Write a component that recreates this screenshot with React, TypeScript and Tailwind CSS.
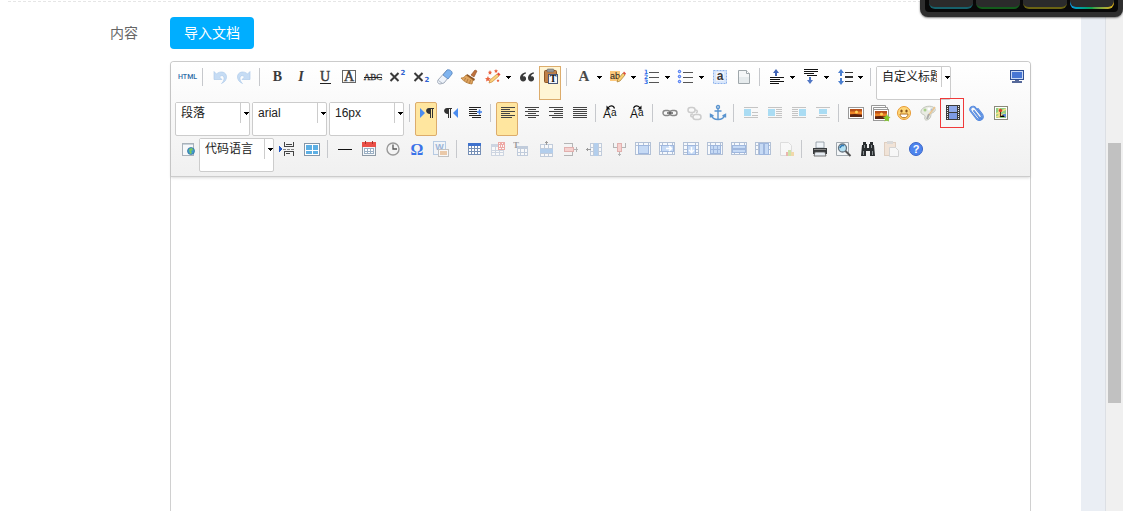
import React from "react";

type Tool = {
  name: string;
  icon?: React.ReactNode;
  arrow?: boolean;
  active?: "soft" | "strong";
  framed?: boolean;
  select?: boolean;
  disabled?: boolean;
};

const SERIF = "Liberation Serif, serif";
const SANS = "Liberation Sans, sans-serif";
const WIDE = "DejaVu Sans, sans-serif";

const sep: Tool = { name: "|" };

/* horizontal text lines, each one is [x1, x2, y] */
const lines = (rows: number[][], color = "#222") => (
  <g shapeRendering="crispEdges" fill={color}>
    {rows.map(([a, b, y]) => (
      <rect key={`${a}-${b}-${y}`} x={a} y={y} width={b - a} height="1" />
    ))}
  </g>
);

/* faded table with the affected cells [x, y, w, h] filled in */
const cells = (cols: number[], rows: number[], fills: number[][]) => (
  <g shapeRendering="crispEdges">
    <rect x="1" y="1" width="16" height="13" fill="#b3c1d6" />
    <rect x="2" y="2" width="14" height="11" fill="#f6f9fd" />
    {cols.map((x) => (
      <rect key={`c${x}`} x={x} y="1" width="1" height="13" fill="#b3c1d6" />
    ))}
    {rows.map((y) => (
      <rect key={`r${y}`} x="1" y={y} width="16" height="1" fill="#b3c1d6" />
    ))}
    {fills.map(([x, y, w, h]) => (
      <g key={`${x}-${y}`}>
        <rect x={x} y={y} width={w} height={h} fill="#9fb7de" />
        <rect x={x + 1} y={y + 1} width={w - 2} height={h - 2} fill="#c6daf5" />
      </g>
    ))}
  </g>
);

const floatLines = [
  [1, 15, 3],
  [1, 15, 13],
];

const textIcon = (
  t: string,
  size = 14,
  props: React.SVGProps<SVGTextElement> = {},
) => (
  <text
    x="8.5"
    y="12"
    textAnchor="middle"
    fontFamily={SERIF}
    fontSize={size}
    fontWeight="bold"
    fill="#3a3a3a"
    {...props}
  >
    {t}
  </text>
);

const curlUndo = (
  <path
    d="M2 2.500v8h8L7.500 8C9 6 12 6 12 9.500c0 2-1 3.500-2.500 5 3.500-1.500 5-4 5-6.500C14.500 2.500 8 1.500 4.500 5z"
    fill="#c6dcf4"
    stroke="#a9c8ea"
    strokeWidth=".6"
  />
);

const pilcrow = (x: number) => (
  <g transform={`translate(${x} 0)`} fill="#333">
    <path d="M4 3h5v1H8v9H7V4H6v9H5V9C0 9 0 3 4 3z" />
  </g>
);

const film = (
  <g shapeRendering="crispEdges">
    <rect x="2" y="0" width="14" height="15" fill="#3c3c3c" />
    <rect x="5" y="1" width="8" height="6" fill="#8fa9ea" />
    <rect x="5" y="8" width="8" height="6" fill="#7d9ae4" />
    {[1, 3, 5, 7, 9, 11, 13].map((y) => (
      <g key={y} fill="#eee">
        <rect x="3" y={y} width="1" height="1" />
        <rect x="14" y={y} width="1" height="1" />
      </g>
    ))}
  </g>
);

const sunset = (
  <g>
    <rect x="0.5" y="2.5" width="15" height="11" fill="#fff" stroke="#999" />
    <rect x="2" y="4" width="12" height="8" fill="#b8501a" />
    <path d="M2 6.500h12v2.500H2z" fill="#ee8426" />
    <circle cx="8.500" cy="7" r="1.500" fill="#ffd35a" />
    <path d="M2 9.500l5-.5 7 1v2H2z" fill="#5a2410" />
  </g>
);

const cased = (flip: boolean) => (
  <g>
    <text x="1" y="13" fontFamily={SANS} fontSize="12" fill="#111">
      A
    </text>
    <text x="9" y="11" fontFamily={SANS} fontSize="10" fill="#111">
      a
    </text>
    <g transform={flip ? "translate(17 0) scale(-1 1)" : ""}>
      <path d="M6 3C7.500 0 11.500 0 12.500 3.500" stroke="#111" strokeWidth="1.200" fill="none" />
      <path d="M4.500 0.500v4h4z" fill="#111" />
    </g>
  </g>
);

const rowOne: Tool[] = [
  {
    name: "源代码",
    icon: (
      <text x="-1" y="10" fontFamily="Roboto, sans-serif" fontSize="7" fontWeight="500" fill="#2f6ca8">
        HTML
      </text>
    ),
  },
  sep,
  { name: "撤销", icon: curlUndo, disabled: true },
  {
    name: "重做",
    icon: <g transform="translate(16 0) scale(-1 1)">{curlUndo}</g>,
    disabled: true,
  },
  sep,
  { name: "加粗", icon: textIcon("B", 14) },
  { name: "斜体", icon: textIcon("I", 14, { x: 8, fontStyle: "italic" }) },
  {
    name: "下划线",
    icon: (
      <>
        {textIcon("U", 14, { x: 8, y: 12, fontWeight: "normal", stroke: "#3a3a3a", strokeWidth: 0.4 })}
        {lines([[3, 14, 14]])}
      </>
    ),
  },
  {
    name: "字符边框",
    icon: (
      <>
        <rect x="1.5" y="1.5" width="13" height="12" fill="none" stroke="#666" />
        {textIcon("A", 14, { x: 8, fontWeight: "normal", stroke: "#3a3a3a", strokeWidth: 0.4 })}
      </>
    ),
  },
  {
    name: "删除线",
    icon: (
      <>
        {textIcon("ABC", 9, { x: 8, y: 11, fontWeight: "normal", stroke: "#3a3a3a", strokeWidth: 0.3 })}
        {lines([[-1, 17, 8]])}
      </>
    ),
  },
  {
    name: "上标",
    icon: (
      <>
        <path d="M1.500 4l8 8M9.500 4l-8 8" stroke="#3a3a3a" strokeWidth="2" />
        {textIcon("2", 7, { x: 14, y: 6, fontFamily: WIDE, fill: "#2f62d0" })}
      </>
    ),
  },
  {
    name: "下标",
    icon: (
      <>
        <path d="M1.500 4l8 8M9.500 4l-8 8" stroke="#3a3a3a" strokeWidth="2" />
        {textIcon("2", 7, { x: 14, y: 13, fontFamily: WIDE, fill: "#2f62d0" })}
      </>
    ),
  },
  {
    name: "清除格式",
    icon: (
      <g>
        <path d="M1 11L10 1l5 3-8 10-4 1c-2 0-3-2-2-4z" fill="#eef3fa" stroke="#8b97a8" strokeWidth=".8" />
        <path d="M6 6l4-5c2-1 6 1 5 4l-4 5z" fill="#7fb4ef" stroke="#5b85bd" strokeWidth=".8" />
        <path d="M1.500 11.500l4 3" stroke="#aab4c2" />
      </g>
    ),
  },
  {
    name: "格式刷",
    icon: (
      <g>
        <path d="M10 6l4-5 2 1-3 6z" fill="#c0723c" stroke="#8d4c20" strokeWidth=".6" />
        <path d="M6 5l8 5-1 2-8-5z" fill="#8a5426" />
        <path d="M5 6l7 5-1 4c-4-.5-8-2-11-6 2 0 4-1 5-3z" fill="#e0a560" stroke="#a96d25" strokeWidth=".7" />
        <path d="M4.500 9l-1 2.500M7 10l-1.500 3.500M9.500 11l-1 3.500" stroke="#a06c30" strokeWidth=".7" />
      </g>
    ),
  },
  {
    name: "自动排版",
    arrow: true,
    icon: (
      <g>
        <path d="M4 14l1-3L12 5l2 2-7 6z" fill="#fbd07c" stroke="#c98b3a" strokeWidth=".7" />
        <path d="M12 5l1.500-1.500 2 2L14 7z" fill="#e94c3c" />
        <path d="M3 7l.8 2 2 .2-1.500 1.300.5 2L3 11.500l-2 1 .5-2L0 9.200 2 9zM5 1l.6 1.500L7 3 6 4l.3 1.500L5 5l-1.500.5L4 4 3 3l1.400-.5zM11 0l.6 1.200 1.400.3-1 1 .2 1.300-1.200-.6-1.200.6.2-1.300-1-1 1.400-.3zM13 10l.5 1 1 .3-.7.8.2 1-1-.5-1 .5.2-1-.7-.8 1-.3z" fill="#ea6440" />
      </g>
    ),
  },
  {
    name: "引用",
    icon: (
      <path
        d="M7 3.500C3.500 3.500 1 6 1 9c0 5 7 4 6 0-.4-2-2-2-3-1.500C4 6 5 5 7 4.500zM15 3.500c-3.500 0-6 2.500-6 5.500 0 5 7 4 6 0-.4-2-2-2-3-1.500 0-1.500 1-2.500 3-3z"
        fill="#3a3a3a"
      />
    ),
  },
  {
    name: "纯文本粘贴模式",
    active: "soft",
    icon: (
      <g>
        <rect x="1.500" y="1.500" width="12" height="12" rx="1" fill="#c08048" stroke="#8e5826" />
        <rect x="4" y="0" width="7" height="3" rx="1" fill="#9a9a9a" stroke="#666" strokeWidth=".6" />
        <rect x="5.500" y="5.500" width="9" height="9" fill="#f4f7fc" stroke="#4b5878" />
        <text x="10" y="13" textAnchor="middle" fontFamily={SERIF} fontSize="10" fontWeight="bold" fill="#111">
          T
        </text>
      </g>
    ),
  },
  sep,
  { name: "字体颜色", arrow: true, icon: textIcon("A", 15, { x: 8, y: 12, fill: "#4a4a4a" }) },
  {
    name: "背景色",
    arrow: true,
    icon: (
      <g>
        <rect x="0" y="2" width="10" height="10" fill="#fcc87c" />
        <text x="0" y="10" fontFamily={SANS} fontSize="9" fill="#222">
          ab
        </text>
        <path d="M8 10l5-6 2 2-5 6-3 1z" fill="#f7cf72" stroke="#a57a34" strokeWidth=".7" />
        <path d="M13 4l1-1.500 2 2-1 1.500z" fill="#e04c3c" />
      </g>
    ),
  },
  {
    name: "有序列表",
    arrow: true,
    icon: (
      <g>
        {["1", "2", "3"].map((n, i) => (
          <text key={n} x="0" y={5 + i * 5} fontFamily={WIDE} fontSize="6" fontWeight="bold" fill="#2f6fe8">
            {n}
          </text>
        ))}
        {lines([[5, 15, 3], [5, 15, 8], [5, 15, 13]], "#555")}
      </g>
    ),
  },
  {
    name: "无序列表",
    arrow: true,
    icon: (
      <g>
        {[2, 7, 12].map((y) => (
          <circle key={y} cx="1.500" cy={y + 0.5} r="1.200" fill="#bcd0ff" stroke="#2f62f0" />
        ))}
        {lines([[5, 15, 3], [5, 15, 8], [5, 15, 13]], "#555")}
      </g>
    ),
  },
  {
    name: "全选",
    icon: (
      <g>
        <rect x="1.500" y="1.500" width="13" height="13" fill="#d9e7fb" stroke="#8db2ec" strokeDasharray="2 1" />
        <rect x="4" y="3" width="8" height="9" fill="#f0f4fc" />
        {textIcon("a", 12, { x: 8, y: 11, fontFamily: SANS })}
      </g>
    ),
  },
  {
    name: "清空文档",
    icon: (
      <g>
        <path d="M2.500 1.500h8l3 3v10h-11z" fill="#f5f7f8" stroke="#9fa7ab" />
        <path d="M3 8h10v6H3z" fill="#e6ebed" />
        <path d="M10.500 1.500v3h3" fill="#fff" stroke="#9fa7ab" />
      </g>
    ),
  },
  sep,
  {
    name: "段前距",
    arrow: true,
    icon: (
      <g>
        <path d="M7 0l3 4H8v3H6V4H4z" fill="#3f63b5" />
        {lines([[1, 15, 8], [1, 11, 10], [1, 15, 12], [1, 10, 14]], "#111")}
      </g>
    ),
  },
  {
    name: "段后距",
    arrow: true,
    icon: (
      <g>
        <path d="M7 15l3-4H8V8H6v3H4z" fill="#5076c4" />
        {lines([[1, 15, 0], [1, 15, 2], [1, 11, 4], [4, 14, 6]], "#111")}
      </g>
    ),
  },
  {
    name: "行间距",
    arrow: true,
    icon: (
      <g>
        <path d="M4 0l3 4H5v3H3V4H1zM4 16l3-4H5V9H3v3H1z" fill="#4b7fd0" />
        {lines([[8, 16, 3], [8, 16, 7], [8, 16, 8], [8, 16, 12]], "#333")}
      </g>
    ),
  },
  sep,
  { name: "自定义标题", select: true },
];

const rowTwo: Tool[] = [
  { name: "段落", select: true },
  { name: "arial", select: true },
  { name: "16px", select: true },
  sep,
  {
    name: "从左向右输入",
    active: "strong",
    icon: (
      <g>
        <path d="M1 3l5 5-5 5z" fill="#4a8cf0" />
        {pilcrow(6)}
      </g>
    ),
  },
  {
    name: "从右向左输入",
    icon: (
      <g>
        <path d="M15 3l-5 5 5 5z" fill="#4a8cf0" />
        {pilcrow(0)}
      </g>
    ),
  },
  {
    name: "首行缩进",
    icon: (
      <g>
        {lines([[2, 14, 2], [2, 10, 4], [2, 10, 6], [2, 10, 8], [2, 14, 10], [5, 14, 12]])}
        <path d="M10 7h5M12.500 4.500v5" stroke="#3f7fe8" strokeWidth="1.500" />
      </g>
    ),
  },
  sep,
  { name: "居左对齐", active: "strong", icon: lines([[1, 15, 2], [1, 10, 4], [1, 15, 6], [1, 10, 8], [1, 15, 10], [1, 12, 12]], "#444") },
  { name: "居中对齐", icon: lines([[1, 15, 2], [4, 12, 4], [1, 15, 6], [4, 12, 8], [1, 15, 10], [4, 12, 12]], "#444") },
  { name: "居右对齐", icon: lines([[1, 15, 2], [6, 15, 4], [1, 15, 6], [6, 15, 8], [1, 15, 10], [4, 15, 12]], "#444") },
  { name: "两端对齐", icon: lines([[1, 15, 2], [1, 15, 4], [1, 15, 6], [1, 15, 8], [1, 15, 10], [1, 15, 12]], "#444") },
  sep,
  { name: "字母大写", icon: <g transform="translate(-3 0)">{cased(false)}</g> },
  { name: "字母小写", icon: cased(true) },
  sep,
  {
    name: "超链接",
    icon: (
      <g fill="none" stroke="#888" strokeWidth="1.400">
        <rect x="1" y="5.500" width="7" height="5" rx="2.500" />
        <rect x="8" y="5.500" width="7" height="5" rx="2.500" />
        <path d="M5 8h6" stroke="#555" />
      </g>
    ),
  },
  {
    name: "取消链接",
    disabled: true,
    icon: (
      <g fill="none" stroke="#ccc" strokeWidth="1.500">
        <rect x="2" y="2.500" width="7" height="5" rx="2.500" />
        <rect x="7" y="9.500" width="8" height="5" rx="2.500" />
        <path d="M9 5c3 0 3 2 1 3M7 12c-3 0-3-3 0-3" />
      </g>
    ),
  },
  {
    name: "锚点",
    icon: (
      <g fill="none" stroke="#5a94cf" strokeWidth="1.400">
        <circle cx="8" cy="2" r="1.500" />
        <path d="M8 4v11M4.500 6h7M1 10c1 3 4 4.500 7 4.500s6-1.500 7-4.500M.5 12.500V9.500L3.500 11M15.500 12.500V9.500L12.500 11" />
      </g>
    ),
  },
  sep,
  {
    name: "默认",
    disabled: true,
    icon: (
      <g>
        {lines([[1, 15, 2], [1, 15, 12], [9, 15, 7], [9, 15, 10]], "#c4c4c4")}
        <rect x="1" y="4" width="7" height="7" fill="#aadcf3" />
      </g>
    ),
  },
  {
    name: "左浮动",
    disabled: true,
    icon: (
      <g>
        {lines([[1, 15, 2], [1, 15, 12], [9, 15, 4], [9, 15, 6], [9, 15, 8], [9, 15, 10]], "#c4c4c4")}
        <rect x="1" y="4" width="7" height="7" fill="#aadcf3" />
      </g>
    ),
  },
  {
    name: "右浮动",
    disabled: true,
    icon: (
      <g>
        {lines([[1, 15, 2], [1, 15, 12], [1, 7, 4], [1, 7, 6], [1, 7, 8], [1, 7, 10]], "#c4c4c4")}
        <rect x="8" y="4" width="7" height="7" fill="#aadcf3" />
      </g>
    ),
  },
  {
    name: "居中",
    disabled: true,
    icon: (
      <g>
        {lines([[1, 15, 2], [1, 15, 12], [4, 12, 10]], "#c4c4c4")}
        <rect x="4" y="4" width="8" height="5" fill="#aadcf3" />
      </g>
    ),
  },
  sep,
  { name: "单图上传", icon: sunset },
  {
    name: "多图上传",
    icon: (
      <g>
        <path d="M-.5 10.500v-10h14v2M1.500 12.500v-10h14v2" fill="#fff" stroke="#999" />
        <g transform="translate(1 2)">{sunset}</g>
        <path d="M15 9l1 2.500 2.500.5-2 2 .5 2.500-2.500-1-2 1 .5-2.500-2-2 2.500-.5z" fill="#84cc2c" />
      </g>
    ),
  },
  {
    name: "表情",
    icon: (
      <g>
        <circle cx="8" cy="8" r="6.500" fill="#ffd778" stroke="#e89a34" />
        <ellipse cx="5.500" cy="6" rx="1.200" ry="1.500" fill="#8a5418" />
        <ellipse cx="10.500" cy="6" rx="1.200" ry="1.500" fill="#8a5418" />
        <path d="M4 9h8c0 5-8 5-8 0z" fill="#fff" stroke="#b5701c" />
      </g>
    ),
  },
  {
    name: "涂鸦",
    icon: (
      <g>
        <path d="M1 6c1-4 8-6 12-4 4 2 2 5-1 6-2 1 0 3-3 6-3 2-5 1-4-2 1-3-5-2-4-6z" fill="#e9ebe3" stroke="#c2c5ba" />
        <circle cx="5" cy="5" r="1.500" fill="#a8d08c" />
        <circle cx="9" cy="4" r="1.500" fill="#fff" />
        <circle cx="12" cy="5" r="1.500" fill="#a5bcdf" />
        <path d="M15 2l-7 9" stroke="#ecc48e" strokeWidth="1.500" />
        <path d="M9 9l-2 5" stroke="#aaa" strokeWidth="2" />
      </g>
    ),
  },
  { name: "视频", framed: true, icon: film },
  {
    name: "附件",
    icon: (
      <g transform="translate(1 0)" fill="none" strokeLinecap="round">
        <path
          d="M5 6l5 6.500c1.500 1.500 3.500 0 2.500-2L6.500 3C4-.5-.5 3 2 6.500l6 7.500c3 2.500 7-.5 5.500-4L9 4"
          stroke="#3d78d8"
          strokeWidth="1.800"
        />
        <path
          d="M5 6l5 6.500c1.500 1.500 3.500 0 2.500-2L6.500 3C4-.5-.5 3 2 6.500l6 7.500c3 2.500 7-.5 5.500-4L9 4"
          stroke="#a9c9f7"
          strokeWidth=".5"
        />
      </g>
    ),
  },
  {
    name: "地图",
    icon: (
      <g>
        <rect x="2.500" y="1.500" width="13" height="13" fill="#fff" stroke="#8a8a7a" />
        <rect x="4" y="3" width="10" height="10" fill="#8fcf82" />
        <path d="M4 9l10-5M7 3v10M4 12l8-3 2 3" stroke="#f4e08a" strokeWidth="1.500" />
        <path d="M10 9l4 4v-4z" fill="#5b8fd8" />
        <circle cx="8.500" cy="5.500" r="1.700" fill="#d8402c" />
        <path d="M8.500 7v4" stroke="#5c2412" />
      </g>
    ),
  },
];

const rowThree: Tool[] = [
  {
    name: "模板",
    icon: (
      <g>
        <rect x="3.500" y="2.500" width="11" height="12" fill="#f6f8fa" stroke="#a9b2ba" />
        <path d="M4 3.500h10" stroke="#c8d2da" />
        <circle cx="12" cy="10" r="3.500" fill="#3f9bd0" stroke="#2c6c98" strokeWidth=".7" />
        <path d="M10 8l3-1 1 2-2 1 1 2-2 1z" fill="#7cc85a" />
      </g>
    ),
  },
  { name: "代码语言", select: true },
  {
    name: "分页",
    icon: (
      <g shapeRendering="crispEdges" fill="#444">
        <path d="M4 1h1v4h8V1h1v5H4zM4 15v-5h10v5h-1v-4H5v4zM6 3h6v1H6zM6 12h4v1H6z" />
        <path d="M3 8h3v1H3zM7 8h3v1H7zM11 8h3v1h-3z" fill="#888" />
        <path d="M-1 5l3 3-3 3z" fill="#2257c4" />
      </g>
    ),
  },
  {
    name: "背景",
    icon: (
      <g shapeRendering="crispEdges">
        <path d="M0 2h16v13H0z" fill="#8496a8" />
        <path d="M1 3h14v11H1z" fill="#fff" />
        <path d="M2 4h6v5H2zM9 4h5v5H9zM2 10h6v3H2zM9 10h5v3H9z" fill="#5cafe4" />
      </g>
    ),
  },
  sep,
  { name: "分隔线", icon: lines([[1, 15, 8]], "#111") },
  {
    name: "日期",
    icon: (
      <g shapeRendering="crispEdges">
        <path d="M1 1h14v14H1z" fill="#8e9aa5" />
        <path d="M2 6h12v8H2z" fill="#f5f8fb" />
        <path d="M1 1h14v5H1z" fill="#ea5048" />
        <path d="M4 0h1v3H4zM11 0h1v3h-1z" fill="#a3342c" />
        <path d="M3 7h10v6H3z" fill="#9bb0c4" />
        <path d="M4 8h2v2H4zM7 8h2v2H7zM10 8h2v2h-2zM4 11h2v1H4zM7 11h2v1H7zM10 11h2v1h-2z" fill="#fff" />
      </g>
    ),
  },
  {
    name: "时间",
    icon: (
      <g>
        <circle cx="8" cy="8" r="6" fill="#f4f4f4" stroke="#999" strokeWidth="1.400" />
        <path d="M8 3.500V8h4" fill="none" stroke="#555" strokeWidth="1.300" />
      </g>
    ),
  },
  { name: "特殊字符", icon: textIcon("Ω", 16, { x: 8, y: 14, fontFamily: SERIF, fill: "#3a72e8" }) },
  {
    name: "图片转存",
    disabled: true,
    icon: (
      <g opacity=".45">
        <rect x=".5" y=".5" width="12" height="13" fill="#eef4fc" stroke="#6f9bd0" />
        <text x="6.5" y="9" textAnchor="middle" fontFamily={SANS} fontSize="9" fontWeight="bold" fill="#2b66b4">
          W
        </text>
        <rect x="5.500" y="8.500" width="10" height="7" fill="#fff" stroke="#888" />
        <rect x="7" y="10" width="7" height="4" fill="#e09850" />
      </g>
    ),
  },
  sep,
  {
    name: "插入表格",
    icon: (
      <g shapeRendering="crispEdges">
        <path d="M2 2h13v12H2z" fill="#7790b6" />
        <path d="M2 2h13v3H2z" fill="#3f72cd" />
        {[3, 6, 9, 12].map((x) =>
          [5, 8, 11].map((y) => (
            <rect key={`${x}-${y}`} x={x} y={y} width="2" height="2" fill="#fff" />
          )),
        )}
      </g>
    ),
  },
  {
    name: "删除表格",
    disabled: true,
    icon: (
      <g shapeRendering="crispEdges" opacity=".5">
        <path d="M1 3h13v12H1z" fill="#a8b8d0" />
        <path d="M2 6h3v3H2zM6 6h3v3H6zM10 6h3v3h-3zM2 10h3v1H2zM6 10h3v1H6zM10 10h3v1h-3zM2 12h3v2H2zM6 12h3v2H6zM10 12h3v2h-3z" fill="#fff" />
        <path d="M8 1h7v8H8z" fill="#e8605a" />
        <path d="M9 2h1v1H9zM12 2h1v1h-1zM9 4h1v2H9zM11 4h1v2h-1zM13 4h1v2h-1zM9 7h2v1H9zM12 7h2v1h-2z" fill="#fff" />
      </g>
    ),
  },
  {
    name: "表格前插入行",
    disabled: true,
    icon: (
      <g opacity=".5">
        <text x="-1" y="7" fontFamily={SERIF} fontSize="9" fontWeight="bold" fill="#444">
          T
        </text>
        <g shapeRendering="crispEdges">
          <path d="M3 5h11v10H3z" fill="#8fa5c4" />
          <path d="M7 8h3v3H7zM11 8h2v3h-2zM7 12h3v2H7zM11 12h2v2h-2zM4 8h2v3H4zM4 12h2v2H4z" fill="#fff" />
        </g>
      </g>
    ),
  },
  {
    name: "前插入行",
    disabled: true,
    icon: (
      <g opacity=".5" shapeRendering="crispEdges">
        <path d="M2 3h13v13H2z" fill="#8fa5c4" />
        <path d="M3 4h3v3H3zM7 4h3v3H7zM11 4h3v3h-3zM3 13h3v2H3zM7 13h3v2H7zM11 13h3v2h-3z" fill="#fff" />
        <path d="M2 8h13v4H2z" fill="#74aae6" />
        <path d="M8 0h1v4H8zM7 1h3v1H7z" fill="#444" />
      </g>
    ),
  },
  {
    name: "删除行",
    disabled: true,
    icon: (
      <g opacity=".5" shapeRendering="crispEdges">
        <path d="M2 2h9v4h-1V3H2zM2 14h8v-3h1v4H2zM12 8h4v1h-4zM14 6h1v5h-1z" fill="#777" />
        <path d="M2 6h10v5H2z" fill="#d0706c" />
        <path d="M3 7h8v3H3z" fill="#f8b0ac" />
      </g>
    ),
  },
  {
    name: "前插入列",
    disabled: true,
    icon: (
      <g opacity=".5" shapeRendering="crispEdges">
        <path d="M4 2h12v13H4z" fill="#8fa5c4" />
        <path d="M5 3h2v3H5zM5 7h2v3H5zM5 11h2v3H5zM13 3h2v3h-2zM13 7h2v3h-2zM13 11h2v3h-2z" fill="#fff" />
        <path d="M8 2h4v13H8z" fill="#74aae6" />
        <path d="M0 8h5v1H0zM1 7h1v3H1z" fill="#444" />
      </g>
    ),
  },
  {
    name: "删除列",
    disabled: true,
    icon: (
      <g opacity=".5" shapeRendering="crispEdges">
        <path d="M3 2h1v4h3v1H3zM15 2h1v5h-4V6h3zM9 11h1v4H9zM8 13h3v1H8z" fill="#777" />
        <path d="M7 2h5v9H7z" fill="#d0706c" />
        <path d="M8 3h3v7H8z" fill="#f8b0ac" />
      </g>
    ),
  },
  { name: "合并多个单元格", disabled: true, icon: cells([4, 9, 14], [4], [[4, 4, 11, 9]]) },
  {
    name: "右合并单元格",
    disabled: true,
    icon: (
      <g>
        {cells([4, 9, 14], [4, 10], [[3, 4, 13, 7]])}
        <path d="M8 7.500h5M11 5l2.500 2.500L11 10" fill="none" stroke="#fff" strokeWidth="1.500" />
      </g>
    ),
  },
  {
    name: "下合并单元格",
    disabled: true,
    icon: (
      <g>
        {cells([5, 13], [4, 8, 11], [[5, 4, 9, 10]])}
        <path d="M9.500 6v5M7 9l2.500 2.500L12 9" fill="none" stroke="#fff" strokeWidth="1.500" />
      </g>
    ),
  },
  {
    name: "拆分单元格",
    disabled: true,
    icon: cells([4, 9, 14], [4], [[4, 4, 4, 5], [7, 4, 5, 5], [11, 4, 4, 5], [4, 8, 4, 5], [7, 8, 5, 5], [11, 8, 4, 5]]),
  },
  { name: "拆分成行", disabled: true, icon: cells([4, 9, 14], [4], [[2, 4, 14, 4], [2, 8, 14, 4]]) },
  { name: "拆分成列", disabled: true, icon: cells([4], [4, 8], [[5, 2, 5, 12], [10, 2, 5, 12]]) },
  {
    name: "图表",
    disabled: true,
    icon: (
      <g opacity=".4">
        <path d="M2.500 1.500h8l3 3v10h-11z" fill="#fff" stroke="#bbb" />
        <path d="M8 11h2v4H8z" fill="#e35b48" />
        <path d="M10 9h3v6h-3z" fill="#98cc42" />
        <path d="M13 11h3v4h-3z" fill="#f0b040" />
      </g>
    ),
  },
  sep,
  {
    name: "打印",
    icon: (
      <g>
        <path d="M5 1h8v6H5z" fill="#f1f5f9" stroke="#8c96a0" strokeWidth=".8" />
        <path d="M2 7h14v6H2z" fill="#383a3c" />
        <path d="M3 8h12v1H3z" fill="#888" />
        <path d="M4 11h10l1 4H3z" fill="#e6ecf2" stroke="#555" strokeWidth=".8" />
      </g>
    ),
  },
  {
    name: "预览",
    icon: (
      <g>
        <path d="M1.500 1.500h12v13h-12z" fill="#f3f6f8" stroke="#a2a9af" />
        <circle cx="7.500" cy="7" r="4" fill="#b4e0f2" stroke="#667480" strokeWidth="1.300" />
        <path d="M5 7c1-3 3-3 4-2" stroke="#2d7ab8" strokeWidth="1.500" fill="none" />
        <path d="M10.500 10l5 5" stroke="#555" strokeWidth="2" />
      </g>
    ),
  },
  {
    name: "查询替换",
    icon: (
      <g fill="#2a2e30">
        <path d="M4 1h3v2h1v4h2V3h1V1h3v3h1l1 11h-5v-5H7v5H2L3 4h1z" />
        <path d="M4.500 10v4M13.500 10v4M5.500 4v3M12.500 4v3" stroke="#8b9294" />
      </g>
    ),
  },
  {
    name: "粘贴",
    disabled: true,
    icon: (
      <g opacity=".35">
        <rect x="1.500" y="1.500" width="11" height="13" fill="#ecc6a4" stroke="#b98a62" />
        <rect x="4" y="0" width="6" height="3" fill="#aaa" />
        <path d="M6.500 6.500h6l3 3v6h-9z" fill="#fff" stroke="#999" />
      </g>
    ),
  },
  {
    name: "帮助",
    icon: (
      <g>
        <circle cx="9" cy="8" r="6.500" fill="#4d84ee" stroke="#3a66c8" />
        <text x="9" y="12" textAnchor="middle" fontFamily={SANS} fontSize="11" fontWeight="bold" fill="#fff">
          ?
        </text>
      </g>
    ),
  },
];

const fullscreen: Tool = {
  name: "全屏",
  icon: (
    <g shapeRendering="crispEdges">
      <path d="M0 1h14v10H0z" fill="#2f4f93" />
      <path d="M1 2h12v8H1z" fill="#c8d8f4" />
      <path d="M2 3h10v6H2z" fill="#4776d4" />
      <path d="M5 11h4v1H5zM2 12h10v2H2z" fill="#56699a" />
    </g>
  ),
};

const Arrow = () => (
  <svg width="10" height="20" viewBox="0 0 10 20" className="shrink-0">
    <path d="M4 9h5l-2.500 3z" fill="#000" shapeRendering="crispEdges" />
  </svg>
);

const ToolItem = ({ tool }: { tool: Tool }) => {
  if (tool.name === "|") {
    return <span className="mt-0.5 mr-[5px] ml-[3px] h-[18px] w-px bg-[#c6c8cc]" />;
  }

  if (tool.select) {
    return (
      <div className="mr-0.5 flex h-[34px] w-[75px] items-start rounded-[2px] border border-[#ccc] bg-white">
        <select
          aria-label={tool.name}
          className="h-5 w-[65px] shrink-0 appearance-none overflow-hidden border-r border-[#ccc] bg-white pr-1 pl-[5px] text-xs leading-5 text-[#222] outline-none"
        >
          <option>{tool.name}</option>
        </select>
        <svg width="8" height="20" viewBox="0 0 8 20">
          <path d="M3 9h5l-2.500 3z" fill="#000" shapeRendering="crispEdges" />
        </svg>
      </div>
    );
  }

  let look = "border-transparent";
  if (tool.active === "soft") look = "border-[#dcac6c] bg-[#fff5d4]";
  if (tool.active === "strong") look = "rounded-[2px] border-[#dcac6c] bg-[#ffe69f]";

  return (
    <button
      type="button"
      title={tool.name}
      aria-label={tool.name}
      disabled={tool.disabled}
      className={`relative mr-0.5 flex h-[34px] shrink-0 items-start border ${look}`}
    >
      <svg width="20" height="20" viewBox="-3 -2 20 20" className="shrink-0 overflow-visible">
        {tool.icon}
      </svg>
      {tool.arrow && <Arrow />}
      {/* red frame that marks the video button */}
      {tool.framed && (
        <span className="absolute -top-[5px] -left-px h-[30px] w-6 border border-[#f03a3a]" />
      )}
    </button>
  );
};

const ToolRow = ({ tools, end }: { tools: Tool[]; end?: Tool }) => (
  <div className="mb-0.5 flex items-start">
    {tools.map((tool, i) => (
      <ToolItem key={i} tool={tool} />
    ))}
    {end && (
      <div className="ml-auto">
        <ToolItem tool={end} />
      </div>
    )}
  </div>
);

const keys = [
  "border-[#17616b]",
  "border-[#145c1c]",
  "border-[#6b6413]",
  "border-[#c9a012]",
];

const FloatingDock = () => (
  <div className="absolute top-0 right-0 h-[17px] w-[203px] rounded-b-lg bg-[#2e2e2e] px-[5px] shadow-[0_1px_2px_rgba(0,0,0,0.5)]">
    <div className="flex h-3 justify-between rounded-b-[4px] bg-[#080808] px-1">
      {keys.map((color, i) =>
        i === 3 ? (
          <div
            key={color}
            className="h-[9px] w-11 rounded-b-md bg-linear-to-r from-[#1599e6] via-[#14a04a] to-[#e0b010] pb-0.5"
          >
            <div className="h-full rounded-b-md bg-[#2c2c2c]" />
          </div>
        ) : (
          <div key={color} className={`h-[9px] w-11 rounded-b-md border-b-2 bg-[#2b2b2b] ${color}`} />
        ),
      )}
    </div>
  </div>
);

const App = () => {
  return (
    <div className="relative flex h-screen overflow-hidden bg-white font-['Liberation_Sans','Noto_Sans_CJK_SC',sans-serif]">
      <main className="flex min-w-0 flex-1 flex-col">
        <div className="mt-px ml-2 border-t border-dashed border-[#e6e6e6]" />
        <div className="flex flex-1 pt-[15px] pr-[50px]">
          <label htmlFor="content" className="w-[138px] shrink-0 text-right text-sm leading-8 text-[#666]">
            内容
          </label>
          <div className="ml-8 flex min-w-0 flex-1 flex-col">
            <button
              type="button"
              className="h-8 self-start rounded-[4px] bg-[#00aeff] px-3.5 text-sm text-white"
            >
              导入文档
            </button>
            <div className="mt-3 flex flex-1 flex-col rounded-t-[4px] border border-b-0 border-[#d0d0d0]">
              <div className="rounded-t-[3px] border-b border-[#ccc] bg-linear-to-b from-white to-[#f0f0f0] pt-1 pr-0 pb-0.5 pl-1 shadow-[0_1px_3px_rgba(0,0,0,0.15)]">
                <ToolRow tools={rowOne} end={fullscreen} />
                <ToolRow tools={rowTwo} />
                <ToolRow tools={rowThree} />
              </div>
              <textarea id="content" className="w-full flex-1 resize-none p-2 text-base outline-none" />
            </div>
          </div>
        </div>
      </main>
      <div className="w-[25px] border-r border-[#dcdfe4] bg-[#eaeef4]" />
      <div className="w-[17px] bg-[#f0f0f0] px-0.5 pt-[143px]">
        <div className="h-[260px] bg-[#c1c1c1]" />
      </div>
      <FloatingDock />
    </div>
  );
};

export default App;
